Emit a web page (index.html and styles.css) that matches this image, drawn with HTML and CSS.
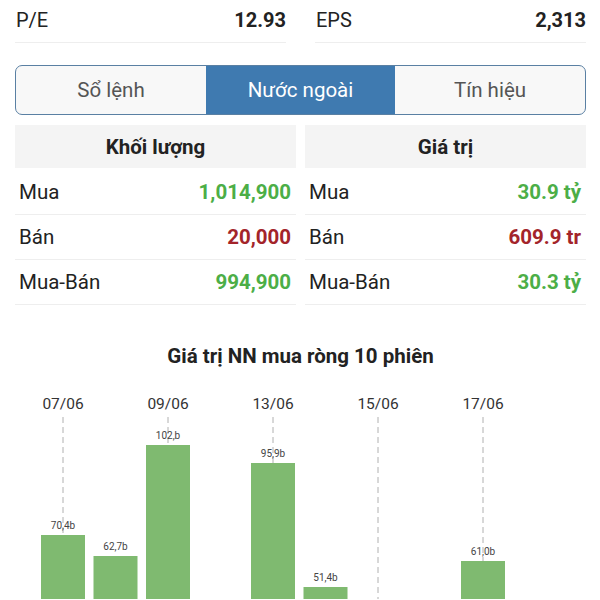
FILE: index.html
```html
<!DOCTYPE html>
<html lang="vi">
<head>
<meta charset="utf-8">
<link rel="stylesheet" href="styles.css">
</head>
<body>
<div class="wrap">
  <div class="stats">
    <div class="stat"><span class="stat-label">P/E</span><span class="stat-value">12.93</span></div>
    <div class="stat"><span class="stat-label">EPS</span><span class="stat-value">2,313</span></div>
  </div>

  <div class="tabs">
    <div class="tab">Sổ lệnh</div>
    <div class="tab active">Nước ngoài</div>
    <div class="tab">Tín hiệu</div>
  </div>

  <div class="tables">
    <div class="table">
      <div class="thead">Khối lượng</div>
      <div class="row first"><span>Mua</span><span class="up">1,014,900</span></div>
      <div class="row"><span>Bán</span><span class="down">20,000</span></div>
      <div class="row"><span>Mua-Bán</span><span class="up">994,900</span></div>
    </div>
    <div class="table">
      <div class="thead">Giá trị</div>
      <div class="row first"><span>Mua</span><span class="up">30.9 tỷ</span></div>
      <div class="row"><span>Bán</span><span class="down">609.9 tr</span></div>
      <div class="row"><span>Mua-Bán</span><span class="up">30.3 tỷ</span></div>
    </div>
  </div>

  <h2 class="chart-title">Giá trị NN mua ròng 10 phiên</h2>
</div>

<svg class="chart" width="600" height="222" viewBox="0 378 600 222">
  <g class="dates">
    <text x="63" y="410">07/06</text>
    <text x="168" y="410">09/06</text>
    <text x="273" y="410">13/06</text>
    <text x="378" y="410">15/06</text>
    <text x="483" y="410">17/06</text>
  </g>
  <g class="grid">
    <line x1="63" y1="418" x2="63" y2="600"/>
    <line x1="168" y1="418" x2="168" y2="600"/>
    <line x1="273" y1="418" x2="273" y2="600"/>
    <line x1="378" y1="418" x2="378" y2="600"/>
    <line x1="483" y1="418" x2="483" y2="600"/>
  </g>
  <g class="bars">
    <rect x="41" y="536" width="44" height="70"/>
    <rect x="93.5" y="557" width="44" height="50"/>
    <rect x="146" y="446" width="44" height="160"/>
    <rect x="251" y="464" width="44" height="140"/>
    <rect x="303.5" y="588" width="44" height="20"/>
    <rect x="461" y="562" width="44" height="40"/>
  </g>
  <g class="vals">
    <text x="63" y="530">70,4b</text>
    <text x="115.5" y="551">62,7b</text>
    <text x="168" y="440">102,b</text>
    <text x="273" y="458">95,9b</text>
    <text x="325.5" y="582">51,4b</text>
    <text x="483" y="556">61,0b</text>
  </g>
</svg>
</body>
</html>
```
FILE: styles.css
```css
* { box-sizing: border-box; }
html, body { margin: 0; padding: 0; background: #fff; }
body {
  width: 600px;
  height: 600px;
  overflow: hidden;
  font-family: Roboto, "Noto Sans", sans-serif;
  color: #222;
}
.wrap { padding: 0 14px 0 15px; }

.stats {
  display: grid;
  grid-template-columns: 1fr 1fr;
  column-gap: 29px;
}
.stat {
  height: 43px;
  display: flex;
  justify-content: space-between;
  align-items: center;
  padding: 0 0 2px 0;
  border-bottom: 1px solid #eeeeee;
  font-size: 20px;
}
.stat-label { color: #222; padding-left: 1px; }
.stat-value { font-weight: 700; color: #222; }

.tabs {
  margin-top: 22px;
  height: 50px;
  display: grid;
  grid-template-columns: 190px 189px 1fr;
  border: 1.5px solid #5a80a3;
  border-radius: 7px;
  overflow: hidden;
  background: #f8f8f8;
}
.tab {
  display: flex;
  align-items: center;
  justify-content: center;
  font-size: 20.5px;
  color: #555;
}
.tab.active { background: #3f7ab0; color: #fff; }

.tables {
  margin-top: 10px;
  display: grid;
  grid-template-columns: 1fr 1fr;
  column-gap: 9px;
}
.thead {
  height: 43px;
  background: #f4f4f4;
  display: flex;
  align-items: center;
  justify-content: center;
  font-weight: 700;
  font-size: 20.5px;
  color: #222;
  margin-bottom: 2px;
}
.row {
  height: 45px;
  display: flex;
  justify-content: space-between;
  align-items: center;
  padding: 0 5px 0 4px;
  border-bottom: 1px solid #eeeeee;
  font-size: 20.5px;
}
.row span:last-child { font-weight: 700; }
.up { color: #4cae47; }
.down { color: #a3242a; }

.chart-title {
  margin: 39px 0 0 0;
  text-align: center;
  font-size: 20.5px;
  font-weight: 700;
  color: #222;
  line-height: 24px;
}
.chart { display: block; margin-top: 9px; }
.chart .dates text {
  font-family: Roboto, sans-serif;
  font-size: 15.5px;
  fill: #333;
  text-anchor: middle;
}
.chart .grid line {
  stroke: #b0b0b0;
  stroke-width: 1;
  stroke-dasharray: 6 4;
}
.chart .bars rect { fill: #7fba70; }
.chart .vals text {
  font-family: Roboto, sans-serif;
  font-size: 10px;
  fill: #444;
  text-anchor: middle;
}
```
